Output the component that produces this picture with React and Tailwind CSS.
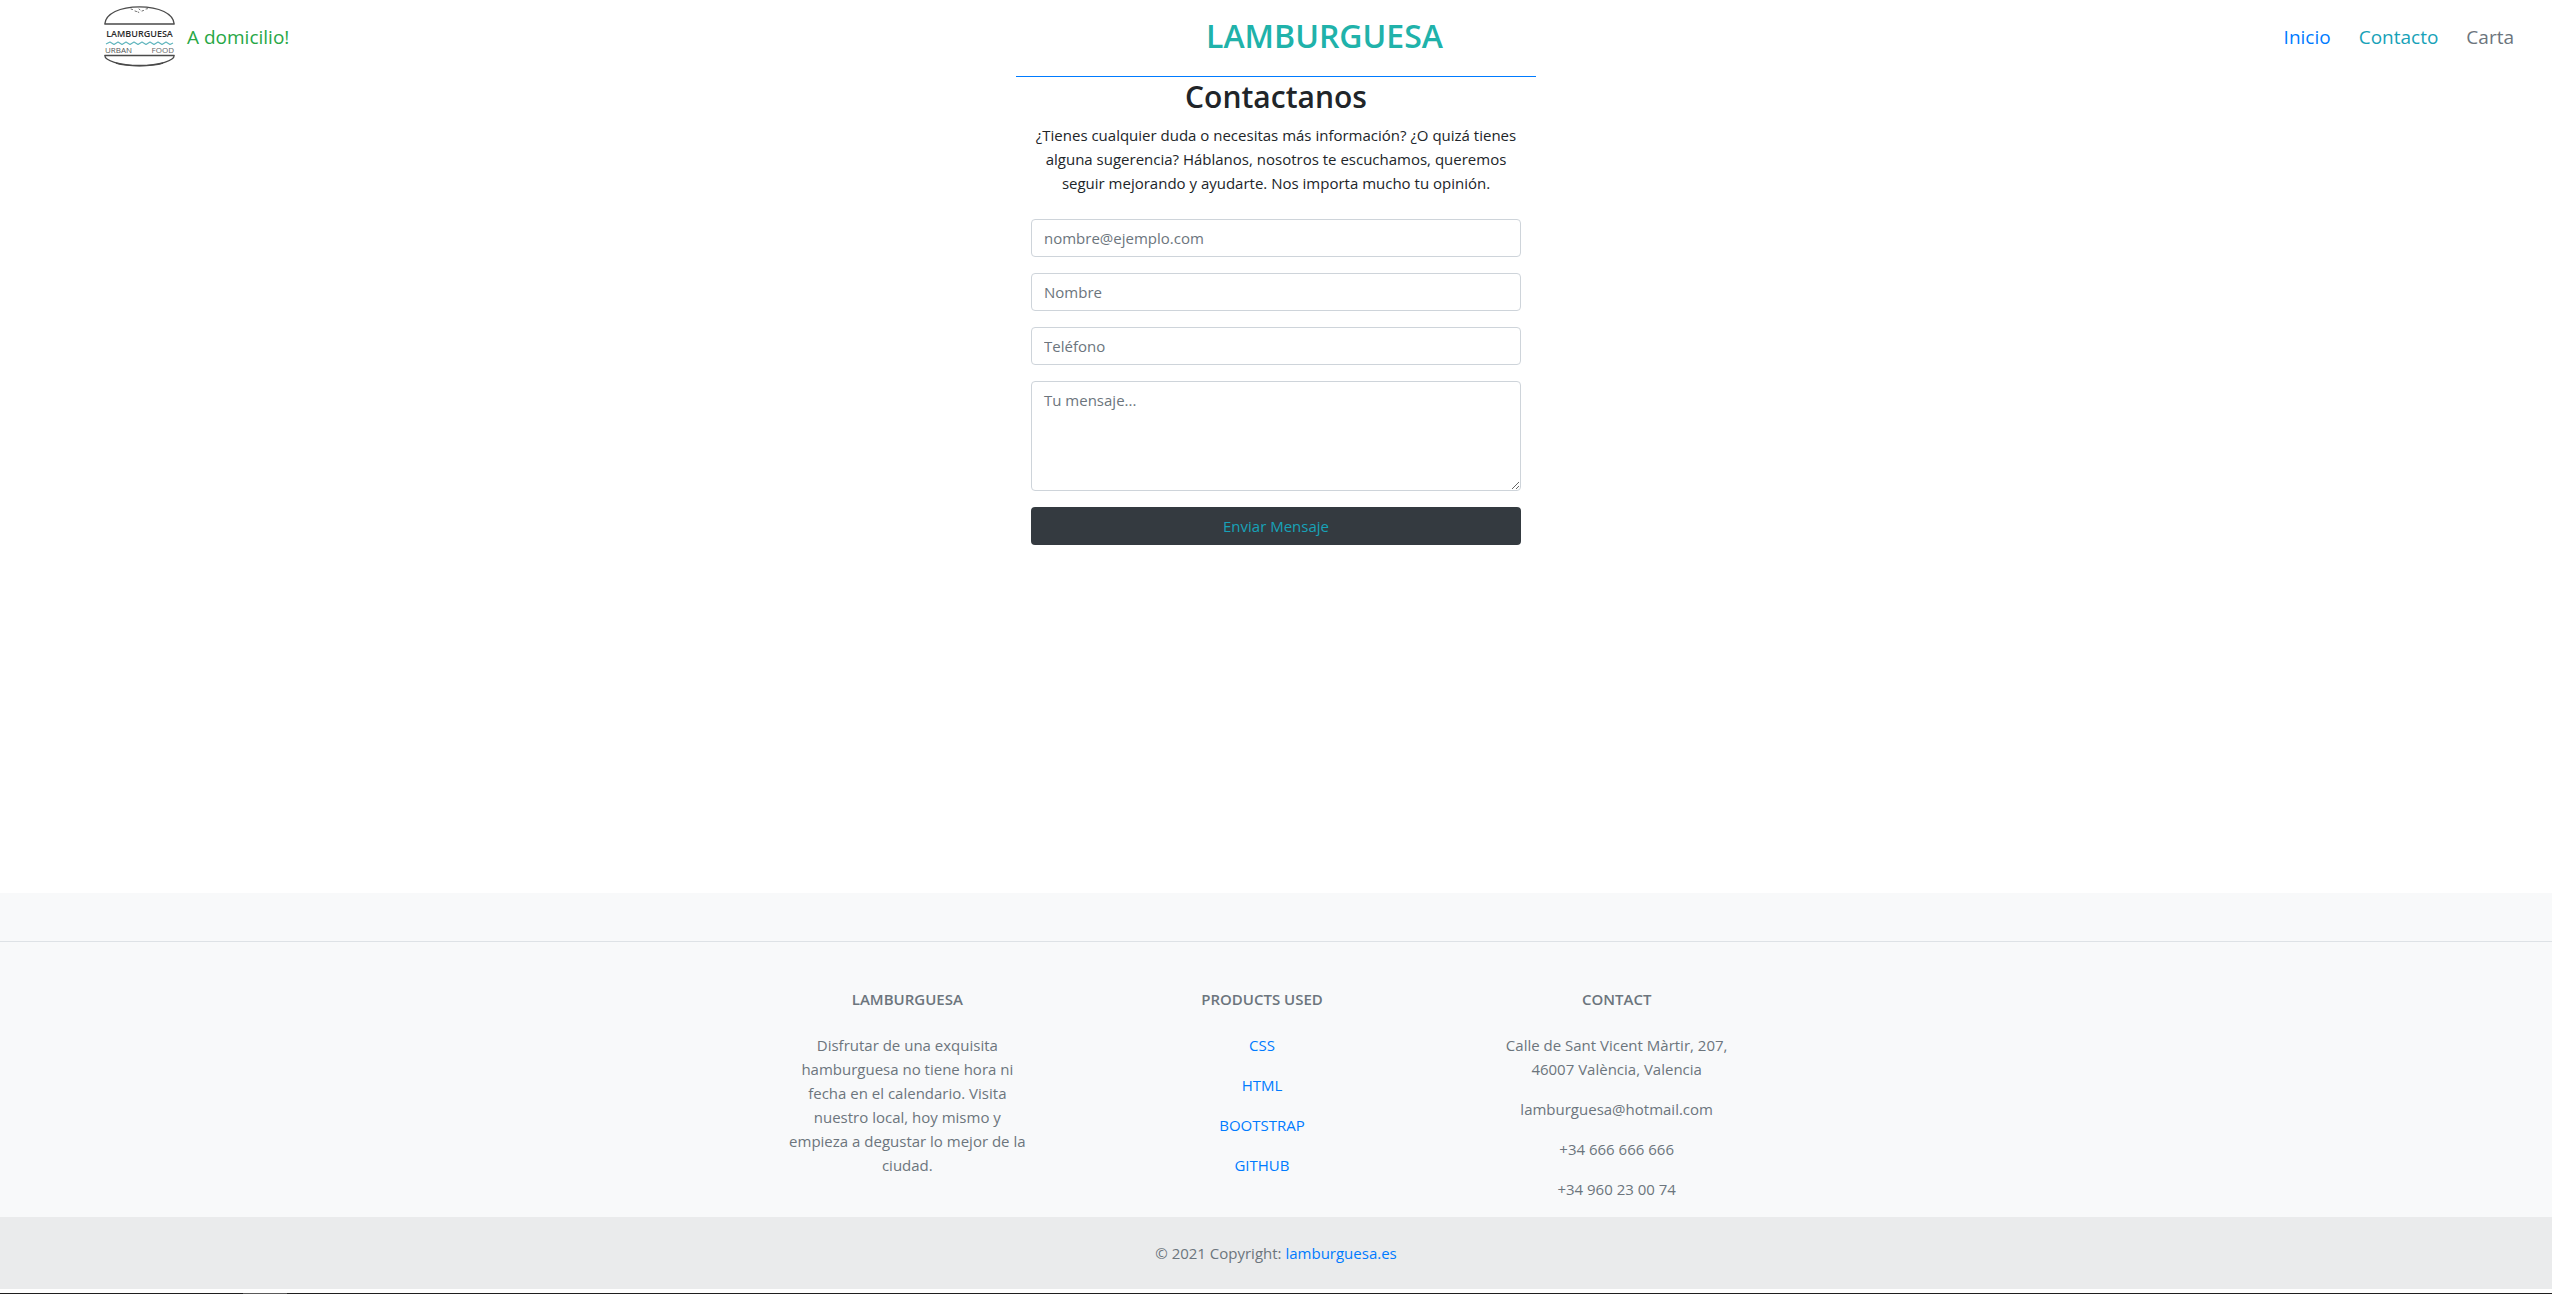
const navLinks = [
  { label: "Inicio", color: "text-[#007bff]" },
  { label: "Contacto", color: "text-[#17a2b8]" },
  { label: "Carta", color: "text-[#6c757d]" },
];

const products = ["CSS", "HTML", "BOOTSTRAP", "GITHUB"];

const fieldClass =
  "block w-full rounded-sm border border-[#ced4da] bg-white px-3 text-[15px] leading-6 text-[#495057] placeholder:text-[#6c757d] placeholder:opacity-100";

function Logo() {
  return (
    <svg width="71" height="61" viewBox="0 0 71 61" role="img" aria-label="Lamburguesa Urban Food" className="shrink-0">
      <g fill="none" stroke="#4a4a4a" strokeWidth="1.3" strokeLinejoin="round">
        <path d="M.8 18C1.500 7.500 16 .8 35.500 .8S69.500 7.500 70.200 18z" />
        <path d="M.8 49.500h69.400c0 5-14 10-34.700 10S.8 54.500 .8 49.500z" />
      </g>
      <path d="M12 57.200c7 2 15 2.600 23.500 2.600s16.500-.6 23.500-2.600" fill="none" stroke="#4a4a4a" strokeWidth="1.3" />
      <path
        d="M27 3l1.500 .5M31 5l1.500 .5M35 3l1 .8M38 5l1.500-.5M42 3l1.500-.3M34 6l.8 .4"
        stroke="#6b6b6b"
        strokeWidth="1"
        strokeLinecap="round"
      />
      <text x="35.500" y="31" textAnchor="middle" fontSize="9" fontWeight="600" fill="#2a2a2a">LAMBURGUESA</text>
      <path
        d="M2 38l4-2 4 2.500 4-2.500 4 2.500 4-2.500 4 2.500 4-2.500 4 2.500 4-2.500 4 2.500 4-2.500 4 2.500 4-2.500 4 2.500 4-2.500 4 2.500 3-1.500"
        fill="none"
        stroke="#5fb5bd"
        strokeWidth="1.2"
        strokeLinejoin="round"
      />
      <text x="1" y="47" fontSize="8" fill="#555">URBAN</text>
      <text x="70" y="47" textAnchor="end" fontSize="8" fill="#666">FOOD</text>
    </svg>
  );
}

function Field({ id, label, type }) {
  return <input id={id} name={id} type={type} aria-label={label} placeholder={label} className={`${fieldClass} h-[38px]`} />;
}

function FooterColumn({ title, children }) {
  return (
    <section className="mx-auto flex max-w-[245px] flex-col gap-4">
      <h6 className="mb-2 text-[15px] leading-[19px] font-semibold uppercase">{title}</h6>
      {children}
    </section>
  );
}

export default function App() {
  return (
    <div className="flex min-h-screen flex-col bg-white font-['Open_Sans',sans-serif] text-[15px] leading-6 text-[#212529]">
      <header className="flex h-[76px] items-start justify-between pr-[38px] pl-[104px]">
        <a href="#domicilio" className="mr-[76px] flex items-center gap-3 pt-[6px] text-[19px] leading-6 text-[#28a745]">
          <Logo />
          A domicilio!
        </a>
        <a href="#inicio" className="text-[32px] leading-[72px] font-semibold text-[#20b2aa]">LAMBURGUESA</a>
        <nav className="flex gap-7 pt-[25px] text-[19px] leading-6">
          {navLinks.map((l) => (
            <a key={l.label} href={`#${l.label.toLowerCase()}`} className={l.color}>{l.label}</a>
          ))}
        </nav>
      </header>

      <main className="flex-1">
        <section className="mx-auto max-w-[520px] border-t border-[#007bff] px-[15px]">
          <h2 className="mb-1.5 text-center text-[30px] leading-10 font-semibold">Contactanos</h2>
          <p className="mb-6 text-center">
            ¿Tienes cualquier duda o necesitas más información? ¿O quizá tienes alguna sugerencia? Háblanos, nosotros te
            escuchamos, queremos seguir mejorando y ayudarte. Nos importa mucho tu opinión.
          </p>
          <form className="flex flex-col gap-4">
            <Field id="email" type="email" label="nombre@ejemplo.com" />
            <Field id="nombre" type="text" label="Nombre" />
            <Field id="telefono" type="tel" label="Teléfono" />
            <textarea
              id="mensaje"
              name="mensaje"
              rows={4}
              aria-label="Tu mensaje..."
              placeholder="Tu mensaje..."
              className={`${fieldClass} resize-y py-[6px]`}
            />
            <button type="button" className="h-[38px] rounded-sm bg-[#343a40] text-[#17a2b8]">Enviar Mensaje</button>
          </form>
        </section>
      </main>

      <footer className="bg-[#f8f9fa] pt-12 text-center text-[#6c757d]">
        <div className="border-t border-[#dee2e6] pt-12">
          <div className="mx-auto grid max-w-[1140px] grid-cols-3 pr-13 pb-4 pl-6">
            <FooterColumn title="Lamburguesa">
              <p>
                Disfrutar de una exquisita hamburguesa no tiene hora ni fecha en el calendario. Visita nuestro local, hoy
                mismo y empieza a degustar lo mejor de la ciudad.
              </p>
            </FooterColumn>
            <FooterColumn title="Products used">
              {products.map((p) => (
                <a key={p} href={`#${p.toLowerCase()}`} className="text-[#007bff]">{p}</a>
              ))}
            </FooterColumn>
            <FooterColumn title="Contact">
              <p>Calle de Sant Vicent Màrtir, 207, 46007 València, Valencia</p>
              <p>lamburguesa@hotmail.com</p>
              <p>+34 666 666 666</p>
              <p>+34 960 23 00 74</p>
            </FooterColumn>
          </div>
        </div>
        <div className="bg-[#eaebec] p-6">
          © 2021 Copyright:{" "}
          <a href="#lamburguesa" className="text-[#007bff]">lamburguesa.es</a>
        </div>
      </footer>
      <div className="mt-1 flex h-px bg-[#1f1f1f] pl-[243px]">
        <div className="w-11 bg-[#5a5a5a]" />
      </div>
    </div>
  );
}
